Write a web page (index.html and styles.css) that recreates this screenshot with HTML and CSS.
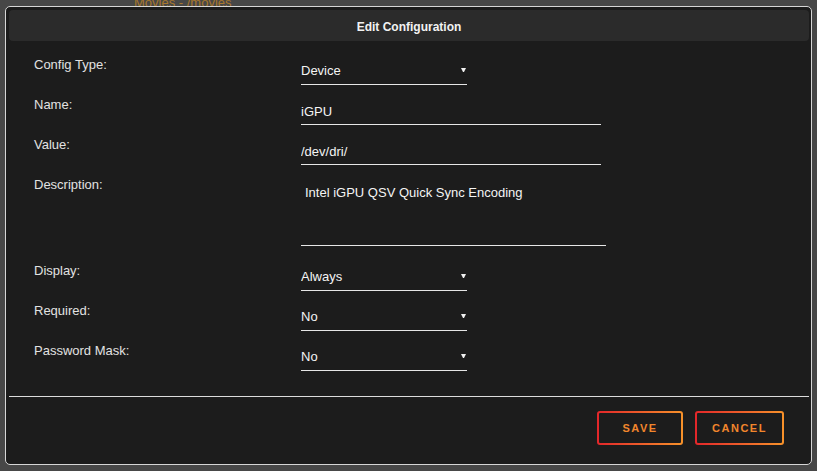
FILE: index.html
```html
<!DOCTYPE html>
<html lang="en">
<head>
    <meta charset="UTF-8">
    <meta name="viewport" content="width=device-width, initial-scale=1.0">
    <title>Edit Configuration</title>
    <link rel="stylesheet" href="styles.css">
</head>
<body>
    <div class="backdrop">Movies - /movies</div>

    <form class="modal" id="editConfigForm" method="post" action="/editConfig">
        <h2 class="modal-header">Edit Configuration</h2>

        <div class="fields">
            <div class="row">
                <label for="configType">Config Type:</label>
                <div class="select-wrap">
                    <select id="configType" name="configType">
                        <option>Device</option>
                        <option>Path</option>
                        <option>Variable</option>
                        <option>Port</option>
                    </select>
                </div>
            </div>

            <div class="row">
                <label for="name">Name:</label>
                <input type="text" id="name" name="name" value="iGPU">
            </div>

            <div class="row">
                <label for="value">Value:</label>
                <input type="text" id="value" name="value" value="/dev/dri/">
            </div>

            <div class="row row-description">
                <label for="description">Description:</label>
                <textarea id="description" name="description">Intel iGPU QSV Quick Sync Encoding</textarea>
            </div>

            <div class="row">
                <label for="display">Display:</label>
                <div class="select-wrap">
                    <select id="display" name="display">
                        <option>Always</option>
                        <option>Advanced</option>
                    </select>
                </div>
            </div>

            <div class="row">
                <label for="required">Required:</label>
                <div class="select-wrap">
                    <select id="required" name="required">
                        <option>No</option>
                        <option>Yes</option>
                    </select>
                </div>
            </div>

            <div class="row">
                <label for="mask">Password Mask:</label>
                <div class="select-wrap">
                    <select id="mask" name="mask">
                        <option>No</option>
                        <option>Yes</option>
                    </select>
                </div>
            </div>
        </div>

        <div class="divider"></div>

        <div class="actions">
            <button type="submit" class="btn btn-save">Save</button>
            <button type="button" class="btn btn-cancel">Cancel</button>
        </div>
    </form>
</body>
</html>
```

FILE: styles.css
```css
* {
    box-sizing: border-box;
    margin: 0;
    padding: 0;
}

body {
    font-family: "Liberation Sans", Arial, sans-serif;
    font-size: 13px;
    background-color: #474747;
    height: 471px;
    overflow: hidden;
}

.backdrop {
    margin-top: -5px;
    padding-left: 134px;
    line-height: 16px;
    color: #a7772c;
}

.modal {
    position: absolute;
    left: 5px;
    top: 6px;
    width: 807px;
    height: 459px;
    border: 1px solid #d6d6d6;
    border-radius: 5px;
    background-color: #1c1c1c;
    display: flex;
    flex-direction: column;
}

.modal-header {
    margin: 3px 2px 0 3px;
    height: 31px;
    background-color: #2b2b2b;
    border-radius: 4px;
    display: flex;
    align-items: center;
    justify-content: center;
    font-size: 12px;
    font-weight: bold;
    color: #f2f2f2;
    padding-top: 2px;
}

.fields {
    padding: 16px 0 0 28px;
    display: flex;
    flex-direction: column;
    gap: 12px;
}

.row {
    display: grid;
    grid-template-columns: 267px auto;
    align-items: start;
}

.row-description {
    margin-bottom: 5px;
}

label {
    line-height: 16px;
    color: #e2e2e2;
}

input, select, textarea {
    font-family: inherit;
    font-size: 13px;
    line-height: 16px;
    color: #f4f4f4;
    background: transparent;
    border: none;
    border-bottom: 1px solid #e6e6e6;
    border-radius: 0;
    outline: none;
    padding: 6px 0 5px;
}

input {
    width: 300px;
    height: 28px;
}

.select-wrap {
    position: relative;
    width: 166px;
}

select {
    appearance: none;
    -webkit-appearance: none;
    width: 166px;
    height: 28px;
}

.select-wrap::after {
    content: "";
    position: absolute;
    right: 1px;
    top: 11px;
    width: 5px;
    height: 4px;
    background-color: #f0f0f0;
    clip-path: polygon(0 0, 100% 0, 60% 100%, 40% 100%);
    pointer-events: none;
}

textarea {
    width: 305px;
    height: 69px;
    padding: 8px 4px 0;
    resize: none;
}

.divider {
    margin: 25px 2px 0 3px;
    height: 1px;
    background-color: #dcdcdc;
}

.actions {
    display: flex;
    justify-content: flex-end;
    gap: 12px;
    padding: 14px 27px 0 0;
}

.btn {
    height: 34px;
    padding: 0;
    background:
        linear-gradient(#1c1c1c, #1c1c1c) padding-box,
        linear-gradient(90deg, #e3262a, #f7922a) border-box;
    border: 2px solid transparent;
    border-radius: 3px;
    font-family: inherit;
    font-size: 11px;
    font-weight: bold;
    letter-spacing: 1.5px;
    text-transform: uppercase;
    color: #f2862c;
    cursor: pointer;
}

.btn-save {
    width: 86px;
}

.btn-cancel {
    width: 89px;
}
```
